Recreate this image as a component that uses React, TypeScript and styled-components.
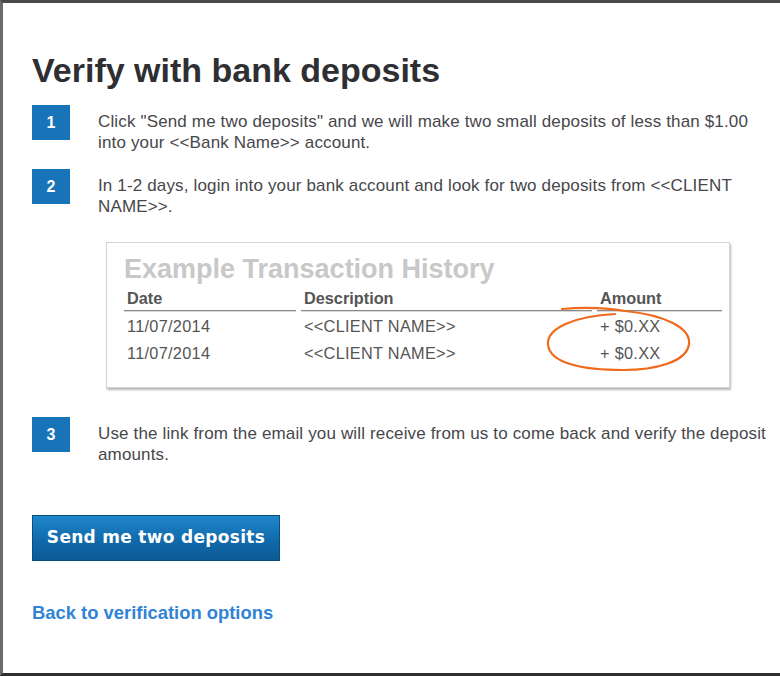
import React from "react";
import styled, { createGlobalStyle } from "styled-components";

const Global = createGlobalStyle`
  html, body { margin: 0; padding: 0; background: #fff; }
  body { font-family: "Liberation Sans", Arial, sans-serif; }
  * { box-sizing: border-box; }
`;

const Frame = styled.div`
  width: 780px;
  height: 676px;
  border-top: 3px solid #4a4a4a;
  border-left: 3px solid #6a6a6a;
  border-bottom: 3px solid #2e2e2e;
  background: #fff;
  padding: 0 8px 0 29px;
  overflow: hidden;
`;

const Title = styled.h1`
  margin: 49px 0 0;
  font-size: 34px;
  line-height: 36px;
  font-weight: bold;
  color: #2f2f33;
`;

const Steps = styled.div`
  display: flex;
  flex-direction: column;
  margin-top: 17px;
`;

const StepRow = styled.div<{ $gapAfter: number }>`
  display: grid;
  grid-template-columns: 38px 1fr;
  column-gap: 28px;
  margin-bottom: ${(p) => p.$gapAfter}px;
`;

const Badge = styled.div`
  width: 38px;
  height: 35px;
  background: #1873b8;
  color: #fff;
  font-weight: bold;
  font-size: 16px;
  display: flex;
  align-items: center;
  justify-content: center;
`;

const StepText = styled.p`
  margin: 0;
  padding-top: 6px;
  font-size: 17px;
  line-height: 21px;
  letter-spacing: 0.15px;
  color: #47474b;
`;

const TxBox = styled.div`
  position: relative;
  margin: 0 0 29px 74px;
  width: 624px;
  height: 146px;
  border: 1px solid #d4d4d4;
  box-shadow: 1px 2px 2px rgba(0, 0, 0, 0.28);
  padding: 11px 7px 0 17px;
`;

const TxTitle = styled.div`
  font-size: 27px;
  line-height: 30px;
  font-weight: bold;
  color: #c8c8c8;
`;

const TxTable = styled.div`
  display: grid;
  grid-template-columns: 172px 291px 1fr;
  column-gap: 5px;
  margin-top: -1px;
`;

const Th = styled.div`
  font-size: 16.3px;
  line-height: 20px;
  font-weight: bold;
  color: #555;
  padding: 5px 0 2px 3px;
  border-bottom: 1px solid #8a8a8a;
  box-shadow: 0 1px 0 #d8d8d8;
`;

const Td = styled.div`
  font-size: 16.3px;
  line-height: 27px;
  letter-spacing: 0.3px;
  color: #555;
  padding-left: 3px;
`;

const FirstTd = styled(Td)`
  padding-top: 2px;
`;

const Circle = styled.svg`
  position: absolute;
  left: 438px;
  top: 63px;
  pointer-events: none;
`;

const Button = styled.button`
  margin-top: 50px;
  width: 248px;
  height: 46px;
  border: 1px solid #0b4f80;
  background: linear-gradient(#1f86cb, #0f68a8 60%, #0c5b95);
  color: #fff;
  font-family: "DejaVu Sans", Verdana, sans-serif;
  font-weight: bold;
  font-size: 17px;
  letter-spacing: 0.3px;
  padding: 0 0 2px;
  cursor: pointer;
  display: block;
`;

const BackLink = styled.a`
  display: inline-block;
  margin-top: 41px;
  font-size: 18.4px;
  line-height: 22px;
  font-weight: bold;
  color: #2f84d6;
  text-decoration: none;
`;

const steps = {
  one: 'Click "Send me two deposits" and we will make two small deposits of less than $1.00 into your <<Bank Name>> account.',
  two: "In 1-2 days, login into your bank account and look for two deposits from <<CLIENT NAME>>.",
  three: "Use the link from the email you will receive from us to come back and verify the deposit amounts.",
};

const rows = [
  { date: "11/07/2014", desc: "<<CLIENT NAME>>", amt: "+ $0.XX" },
  { date: "11/07/2014", desc: "<<CLIENT NAME>>", amt: "+ $0.XX" },
];

export default function App() {
  return (
    <>
      <Global />
      <Frame>
        <Title>Verify with bank deposits</Title>
        <Steps>
          <StepRow $gapAfter={16}>
            <Badge>1</Badge>
            <StepText>{steps.one}</StepText>
          </StepRow>
          <StepRow $gapAfter={25}>
            <Badge>2</Badge>
            <StepText>{steps.two}</StepText>
          </StepRow>
          <TxBox>
            <TxTitle>Example Transaction History</TxTitle>
            <TxTable>
              <Th>Date</Th>
              <Th>Description</Th>
              <Th>Amount</Th>
              {rows.map((r, i) => {
                const Cell = i === 0 ? FirstTd : Td;
                return (
                  <React.Fragment key={i}>
                    <Cell>{r.date}</Cell>
                    <Cell>{r.desc}</Cell>
                    <Cell>{r.amt}</Cell>
                  </React.Fragment>
                );
              })}
            </TxTable>
            <Circle width="150" height="66" viewBox="0 0 150 66">
              <path
                d="M17 3 C40 1 62 2 80 5 C120 9 146 22 144 38 C142 56 110 64 78 64 C40 64 4 58 3 38 C2 22 30 10 70 8"
                fill="none"
                stroke="#ef6a1c"
                strokeWidth="2.2"
                strokeLinecap="round"
              />
            </Circle>
          </TxBox>
          <StepRow $gapAfter={0}>
            <Badge>3</Badge>
            <StepText>{steps.three}</StepText>
          </StepRow>
        </Steps>
        <Button>Send me two deposits</Button>
        <BackLink href="#">Back to verification options</BackLink>
      </Frame>
    </>
  );
}
